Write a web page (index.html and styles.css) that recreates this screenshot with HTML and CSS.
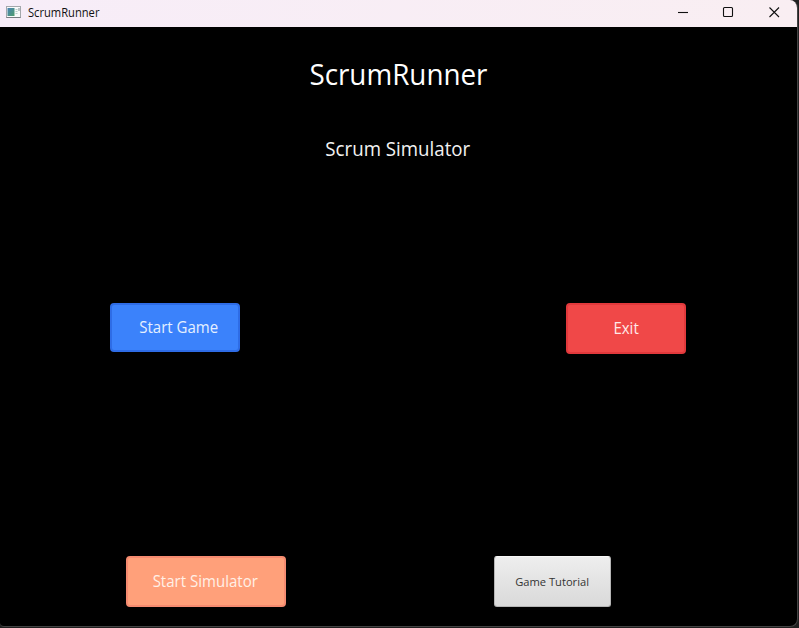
FILE: index.html
```html
<!DOCTYPE html>
<html lang="en">
<head>
<meta charset="utf-8">
<title>ScrumRunner</title>
<link rel="stylesheet" href="styles.css">
</head>
<body>
<div class="window">
  <header class="titlebar">
    <svg class="app-icon" width="15" height="12" viewBox="0 0 15 12">
      <defs><linearGradient id="pane" x2="1" y2="1"><stop stop-color="#4a83b5"/><stop offset="1" stop-color="#4e9d6c"/></linearGradient></defs>
      <rect x=".5" y=".5" width="14" height="11" fill="#f9fafa" stroke="#a4a8ac"/>
      <path d="M.5 11.5h14" stroke="#777b80"/>
      <rect x="1.5" y="2" width="7" height="8" fill="url(#pane)"/>
      <path d="M9.5 3.5h2M9.5 5.5h2M9.5 7.5h2" stroke="#b9d0ca"/>
      <path d="M13 2v3" stroke="#7d8c92"/>
    </svg>
    <span class="caption">ScrumRunner</span>
    <div class="controls">
      <svg width="46" height="27" viewBox="0 0 46 27"><path d="M18 12.5h10"/></svg>
      <svg width="46" height="27" viewBox="0 0 46 27"><rect x="17.5" y="7.5" width="9" height="9" rx="1"/></svg>
      <svg width="46" height="27" viewBox="0 0 46 27"><path d="M17.5 7.5l9.5 9.5M27 7.5L17.5 17"/></svg>
    </div>
  </header>
  <main class="menu">
    <h1><span>ScrumRunner</span></h1>
    <h2><span>Scrum Simulator</span></h2>
    <div class="row primary">
      <button class="start"><span>Start Game</span></button>
      <button class="exit"><span>Exit</span></button>
    </div>
    <div class="row secondary">
      <button class="simulator"><span>Start Simulator</span></button>
      <button class="tutorial"><span>Game Tutorial</span></button>
    </div>
  </main>
</div>
</body>
</html>
```
FILE: styles.css
```css
* { box-sizing: border-box; }
body {
  margin: 0;
  height: 628px;
  overflow: hidden;
  background: #202020;
  font-family: "Open Sans", "Noto Sans", sans-serif;
}
.window {
  width: 798px;
  height: 627px;
  border: solid #444;
  border-width: 0 1px 1px 0;
  border-radius: 0 8px 8px 4px;
  overflow: hidden;
  background: #000;
}
.titlebar {
  display: flex;
  height: 27px;
  background: linear-gradient(90deg, #f7edf8, #f9eef2);
}
.app-icon { margin: 6px 0 0 6px; }
.caption {
  margin: 5px 0 0 7px;
  font-size: 12px;
  line-height: 16px;
  color: #111;
  transform: scaleX(.93);
  transform-origin: left;
}
.controls { display: flex; margin: 0 -1px 0 auto; }
.controls svg { fill: none; stroke: #111; stroke-width: 1.1; }
.menu { display: flex; flex-direction: column; height: 599px; }
h1, h2 { margin: 0; color: #fff; font-weight: 400; text-align: center; }
h1 span { display: inline-block; transform: scaleX(.943); }
h2 span { display: inline-block; transform: translateX(-.7px) scaleX(.935); }
h1 { margin-top: 27px; font-size: 29.5px; line-height: 40px; }
h2 { margin-top: 40px; font-size: 20px; line-height: 30px; color: #f2f2f2; }
.row { display: flex; align-items: flex-start; }
.primary { margin-top: 139px; padding-left: 110px; gap: 326px; }
.secondary { margin-top: 202px; padding-left: 126px; gap: 208px; }
button {
  display: flex;
  align-items: center;
  justify-content: center;
  height: 51px;
  padding: 0 0 2px;
  border: 2px solid;
  border-radius: 4px;
  font: 15.5px "Open Sans", "Noto Sans", sans-serif;
  color: #fff;
}
button span { white-space: nowrap; transform: scaleX(.97); }
.start { width: 130px; height: 49px; padding-left: 7px; background: #3b82fb; border-color: #2e6ce6; color: #e5f0ff; }
.exit { width: 120px; background: #f04848; border-color: #e2393c; color: #ffe9e9; }
.simulator { width: 160px; padding-right: 2px; background: #ffa07a; border-color: #f58b70; color: #fff0e7; }
.tutorial {
  width: 117px;
  padding: 0;
  border: 1px solid #b5b5b5;
  border-top-color: #f8f8f8;
  border-radius: 3px;
  background: linear-gradient(#eee, #d9d9d9);
  font-size: 11.5px;
  color: #333;
}
```
